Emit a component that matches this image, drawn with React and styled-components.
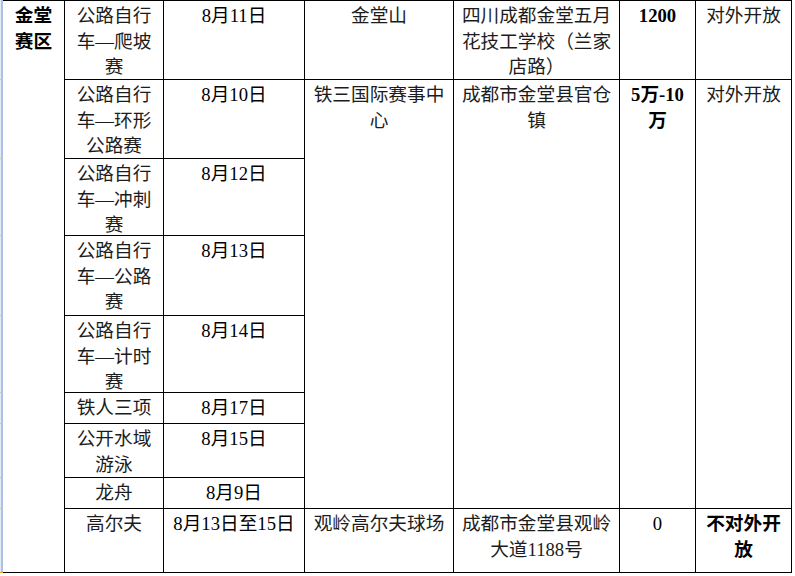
import React from "react";
import styled, { createGlobalStyle } from "styled-components";

const Global = createGlobalStyle`
  html, body { margin: 0; padding: 0; background: #fff; }
  body { font-family: "Liberation Serif", "Noto Sans CJK SC", serif; }
`;

const COLS = [62, 99, 141, 149, 166, 76, 96];
const ROWS = [79, 79, 77, 80, 77, 31, 54, 31, 63];
const TICKS = [79, 158, 235, 315, 392, 423, 477, 508];

const Page = styled.div`
  display: flex;
  align-items: stretch;
  width: 795px;
`;

const Strip = styled.div`
  width: 3px;
  flex: none;
  border-bottom: 1px solid #f0a030;
  background:
    ${TICKS.map((t) => `linear-gradient(#c4c4c4, #c4c4c4) 0 ${t}px / 3px 1px no-repeat`).join(",\n    ")},
    linear-gradient(to right, #e4ebf5 0 1px, #a9c2e6 1px 3px);
`;

const Table = styled.div`
  display: grid;
  grid-template-columns: ${COLS.map((c) => `${c}px`).join(" ")};
  grid-template-rows: ${ROWS.map((r) => `${r}px`).join(" ")};
  border-top: 1px solid #000;
  border-bottom: 1px solid #000;
`;

const Cell = styled.div`
  box-sizing: border-box;
  grid-column: ${(p) => p.$col};
  grid-row: ${(p) => p.$row} / span ${(p) => p.$span || 1};
  border-right: 1px solid #000;
  border-bottom: ${(p) => (p.$last ? "none" : "1px solid #000")};
  padding: 2px 6px 0;
  text-align: center;
  font-size: 18.67px;
  line-height: 25.5px;
  font-weight: ${(p) => (p.$bold ? 700 : 400)};
  color: ${(p) => (p.$bold || p.$dark ? "#000" : "#1c1c1c")};
  overflow: hidden;
`;

const events = [
  ["公路自行车—爬坡赛", "8月11日"],
  ["公路自行车—环形公路赛", "8月10日"],
  ["公路自行车—冲刺赛", "8月12日"],
  ["公路自行车—公路赛", "8月13日"],
  ["公路自行车—计时赛", "8月14日"],
  ["铁人三项", "8月17日"],
  ["公开水域游泳", "8月15日"],
  ["龙舟", "8月9日"],
  ["高尔夫", "8月13日至15日"],
];

export default function App() {
  return (
    <>
      <Global />
      <Page>
        <Strip />
        <Table>
          <Cell $col={1} $row={1} $span={9} $bold $last>
            金堂赛区
          </Cell>
          {events.map(([name, date], i) => (
            <React.Fragment key={name}>
              <Cell $col={2} $row={i + 1} $last={i === 8}>
                {name}
              </Cell>
              <Cell $col={3} $row={i + 1} $last={i === 8} $dark>
                {date}
              </Cell>
            </React.Fragment>
          ))}

          <Cell $col={4} $row={1}>金堂山</Cell>
          <Cell $col={5} $row={1}>四川成都金堂五月花技工学校（兰家店路）</Cell>
          <Cell $col={6} $row={1} $bold>1200</Cell>
          <Cell $col={7} $row={1}>对外开放</Cell>

          <Cell $col={4} $row={2} $span={7}>铁三国际赛事中心</Cell>
          <Cell $col={5} $row={2} $span={7}>成都市金堂县官仓镇</Cell>
          <Cell $col={6} $row={2} $span={7} $bold>5万-10万</Cell>
          <Cell $col={7} $row={2} $span={7}>对外开放</Cell>

          <Cell $col={4} $row={9} $last>观岭高尔夫球场</Cell>
          <Cell $col={5} $row={9} $last>成都市金堂县观岭大道1188号</Cell>
          <Cell $col={6} $row={9} $last $dark>0</Cell>
          <Cell $col={7} $row={9} $last $bold>不对外开放</Cell>
        </Table>
      </Page>
    </>
  );
}
